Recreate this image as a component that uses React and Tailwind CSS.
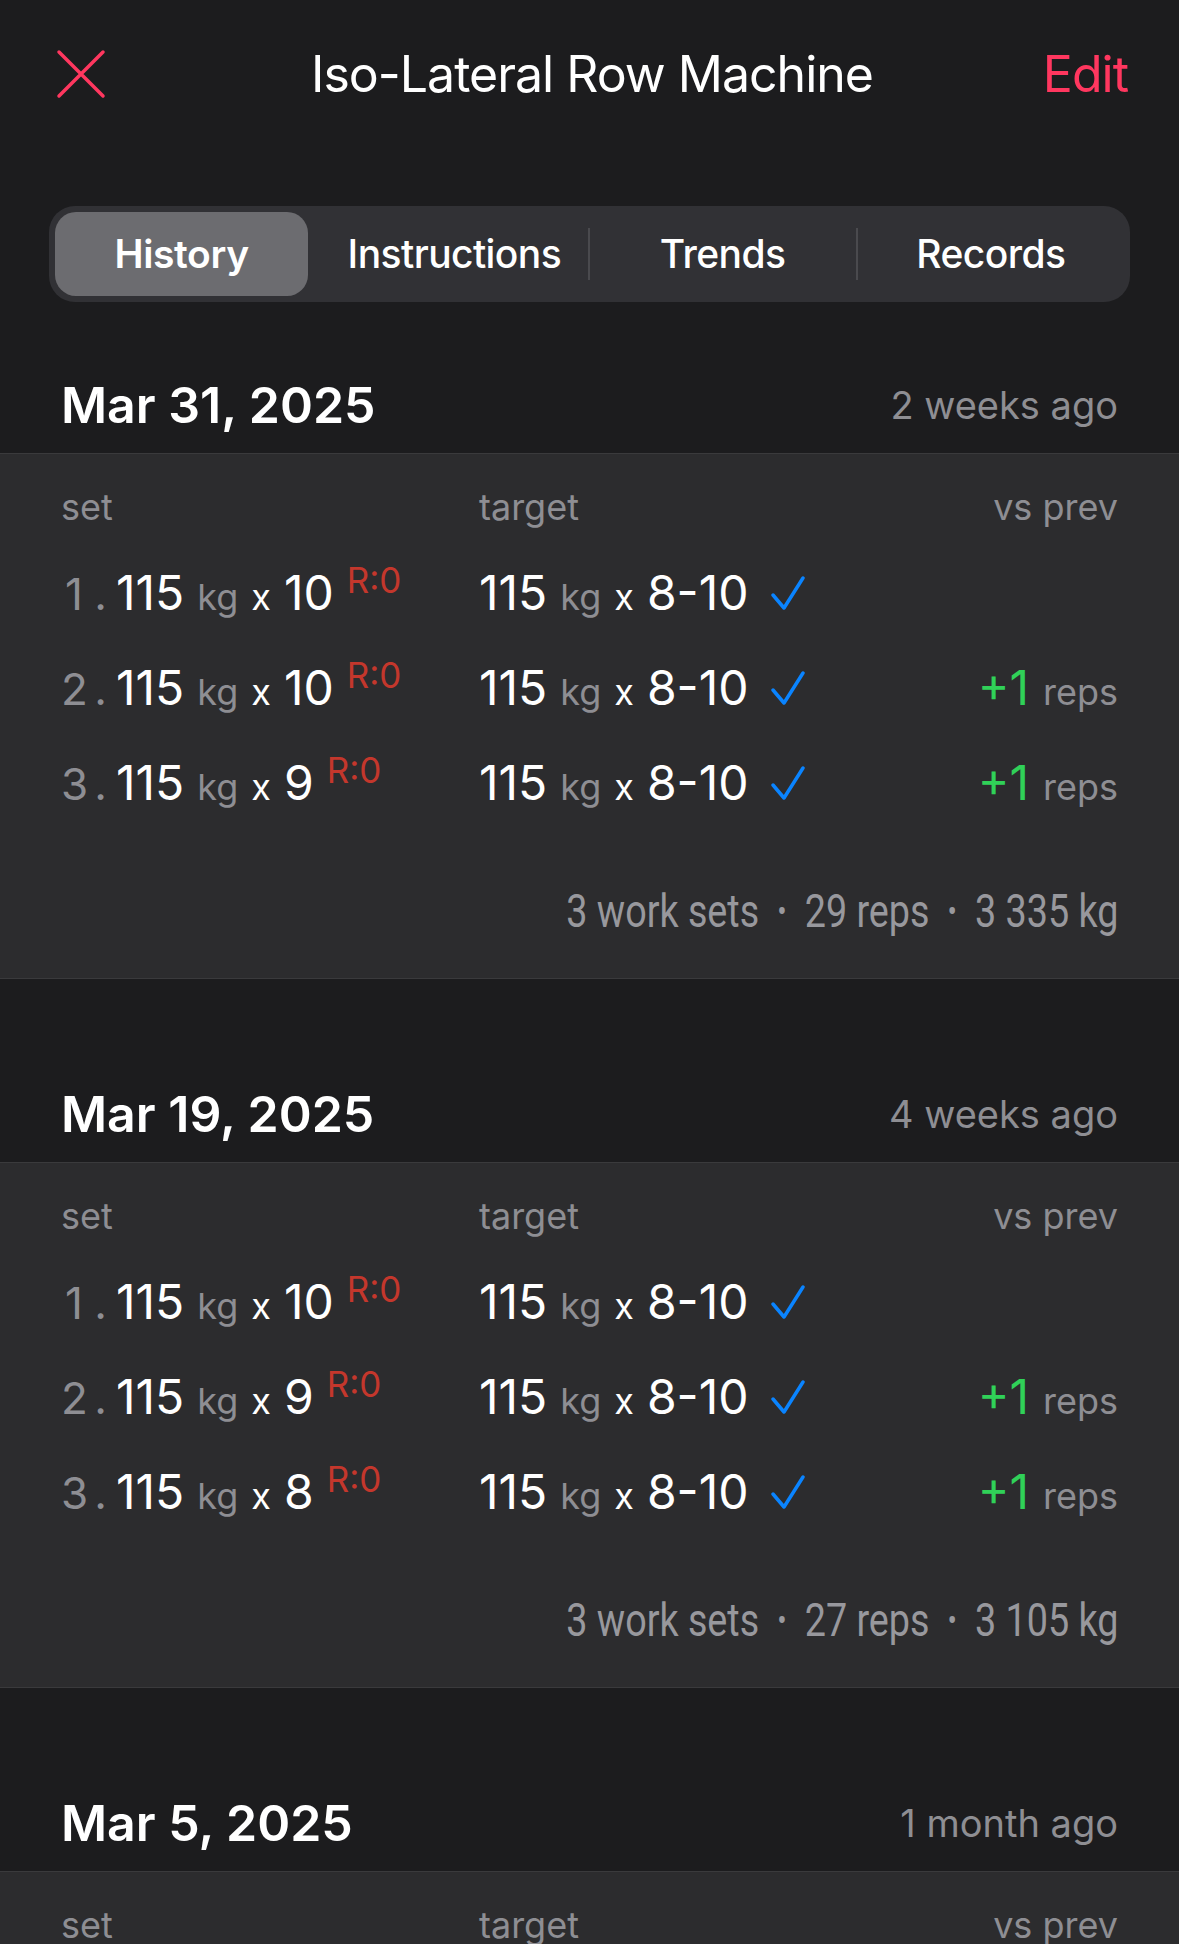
import React from 'react';

const sessions = [
  {
    date: 'Mar 31, 2025',
    ago: '2 weeks ago',
    sets: [
      { reps: '10', diff: null },
      { reps: '10', diff: '+1' },
      { reps: '9', diff: '+1' },
    ],
    summary: ['3 work sets', '29 reps', '3 335 kg'],
  },
  {
    date: 'Mar 19, 2025',
    ago: '4 weeks ago',
    sets: [
      { reps: '10', diff: null },
      { reps: '9', diff: '+1' },
      { reps: '8', diff: '+1' },
    ],
    summary: ['3 work sets', '27 reps', '3 105 kg'],
  },
  {
    date: 'Mar 5, 2025',
    ago: '1 month ago',
    sets: [
      { reps: '9', diff: null },
      { reps: '8', diff: null },
      { reps: '7', diff: null },
    ],
    summary: ['3 work sets', '24 reps', '2 760 kg'],
  },
];

const tabs = ['History', 'Instructions', 'Trends', 'Records'];

function CloseIcon() {
  return (
    <svg width="50" height="50" viewBox="0 0 50 50" fill="none">
      <path d="M3 3 L47 47 M47 3 L3 47" stroke="#ff375f" strokeWidth="3.5" strokeLinecap="round" />
    </svg>
  );
}

function Check() {
  return (
    <svg width="34" height="34" viewBox="0 0 34 34" fill="none" className="self-center mt-[6px]">
      <path d="M2 19 L13 32 L32 2" stroke="#0a84ff" strokeWidth="3.5" strokeLinecap="round" strokeLinejoin="round" />
    </svg>
  );
}

function SetRow({ index, set }) {
  return (
    <div className="grid grid-cols-[418px_1fr_auto] h-[95px] items-center">
      <div className="flex items-baseline leading-none">
        <span className="inline-block w-[26px] text-center text-[44px] text-[#8e8e93]">{index}</span>
        <span className="inline-block w-[27px] text-center text-[44px] text-[#8e8e93]">.</span>
        <span className="ml-[2px] text-[48px] text-white">115</span>
        <span className="ml-[13px] text-[36px] text-[#8e8e93]">kg</span>
        <span className="ml-[13px] text-[36px] text-white">x</span>
        <span className="ml-[13px] text-[48px] text-white">{set.reps}</span>
        <span className="relative -top-[17px] ml-[13px] text-[35px] text-[#c4372c]">R:0</span>
      </div>
      <div className="flex items-baseline leading-none">
        <span className="text-[48px] text-white">115</span>
        <span className="ml-[13px] text-[36px] text-[#8e8e93]">kg</span>
        <span className="ml-[13px] text-[36px] text-white">x</span>
        <span className="ml-[13px] text-[48px] text-white">8-10</span>
        <span className="ml-[22px]">
          <Check />
        </span>
      </div>
      <div className="flex items-baseline justify-end leading-none">
        {set.diff && (
          <>
            <span className="text-[48px] text-[#30d158]">{set.diff}</span>
            <span className="ml-[14px] text-[36px] text-[#8e8e93]">reps</span>
          </>
        )}
      </div>
    </div>
  );
}

function Session({ session, first }) {
  return (
    <section className={first ? 'mt-[41px]' : 'mt-[73px]'}>
      {/* date header */}
      <div className="flex items-center justify-between h-[110px] pt-[14px] px-[61px]">
        <span className="text-[50px] font-semibold leading-none text-white">{session.date}</span>
        <span className="text-[38px] leading-none text-[#8e8e93]">{session.ago}</span>
      </div>

      {/* card */}
      <div className="bg-[#2c2c2e] border-y border-[#3a3a3c] px-[61px] pt-[35px] pb-[44px]">
        <div className="grid grid-cols-[418px_1fr_auto] text-[36px] leading-none text-[#8e8e93]">
          <span>set</span>
          <span>target</span>
          <span className="text-right">vs prev</span>
        </div>
        <div className="mt-[20px]">
          {session.sets.map((s, i) => (
            <SetRow key={i} index={i + 1} set={s} />
          ))}
        </div>
        {/* condensed summary line */}
        <div className="mt-[58px] flex justify-end">
          <div className="flex items-center whitespace-nowrap origin-right scale-x-[0.82] text-[46px] leading-none text-[#98989d] font-['Roboto',sans-serif]">
            <span>{session.summary[0]}</span>
            <span className="mx-[22px] text-[34px]">•</span>
            <span>{session.summary[1]}</span>
            <span className="mx-[22px] text-[34px]">•</span>
            <span>{session.summary[2]}</span>
          </div>
        </div>
      </div>
    </section>
  );
}

export default function App() {
  return (
    <div className="w-full h-[1944px] overflow-hidden bg-[#1c1c1e] font-['Inter',sans-serif]">
      {/* Nav bar */}
      <div className="grid grid-cols-[1fr_auto_1fr] items-center h-[148px] pl-[56px] pr-[51px]">
        <div>
          <CloseIcon />
        </div>
        <h1 className="text-[50px] tracking-[-0.02em] leading-none text-white">Iso-Lateral Row Machine</h1>
        <div className="text-right text-[50px] tracking-[-0.02em] leading-none text-[#ff375f]">Edit</div>
      </div>

      {/* Segmented control */}
      <div className="mt-[58px] mx-[49px] h-[96px] rounded-[26px] bg-[#313135] p-[6px] flex items-center">
        {tabs.map((t, i) => (
          <React.Fragment key={t}>
            {i >= 2 && <div className="w-[2px] h-[52px] bg-[#4a4a4e]" />}
            <div className="flex-1 h-full flex">
              {i === 0 ? (
                <div className="flex-1 mr-[13px] rounded-[21px] bg-[#6c6c70] flex items-center justify-center text-[39px] tracking-[-0.01em] font-semibold text-white">
                  {t}
                </div>
              ) : (
                <div className="flex-1 flex items-center justify-center text-[39px] tracking-[-0.015em] font-medium text-white">
                  {t}
                </div>
              )}
            </div>
          </React.Fragment>
        ))}
      </div>

      {sessions.map((s, i) => (
        <Session key={s.date} session={s} first={i === 0} />
      ))}
    </div>
  );
}
